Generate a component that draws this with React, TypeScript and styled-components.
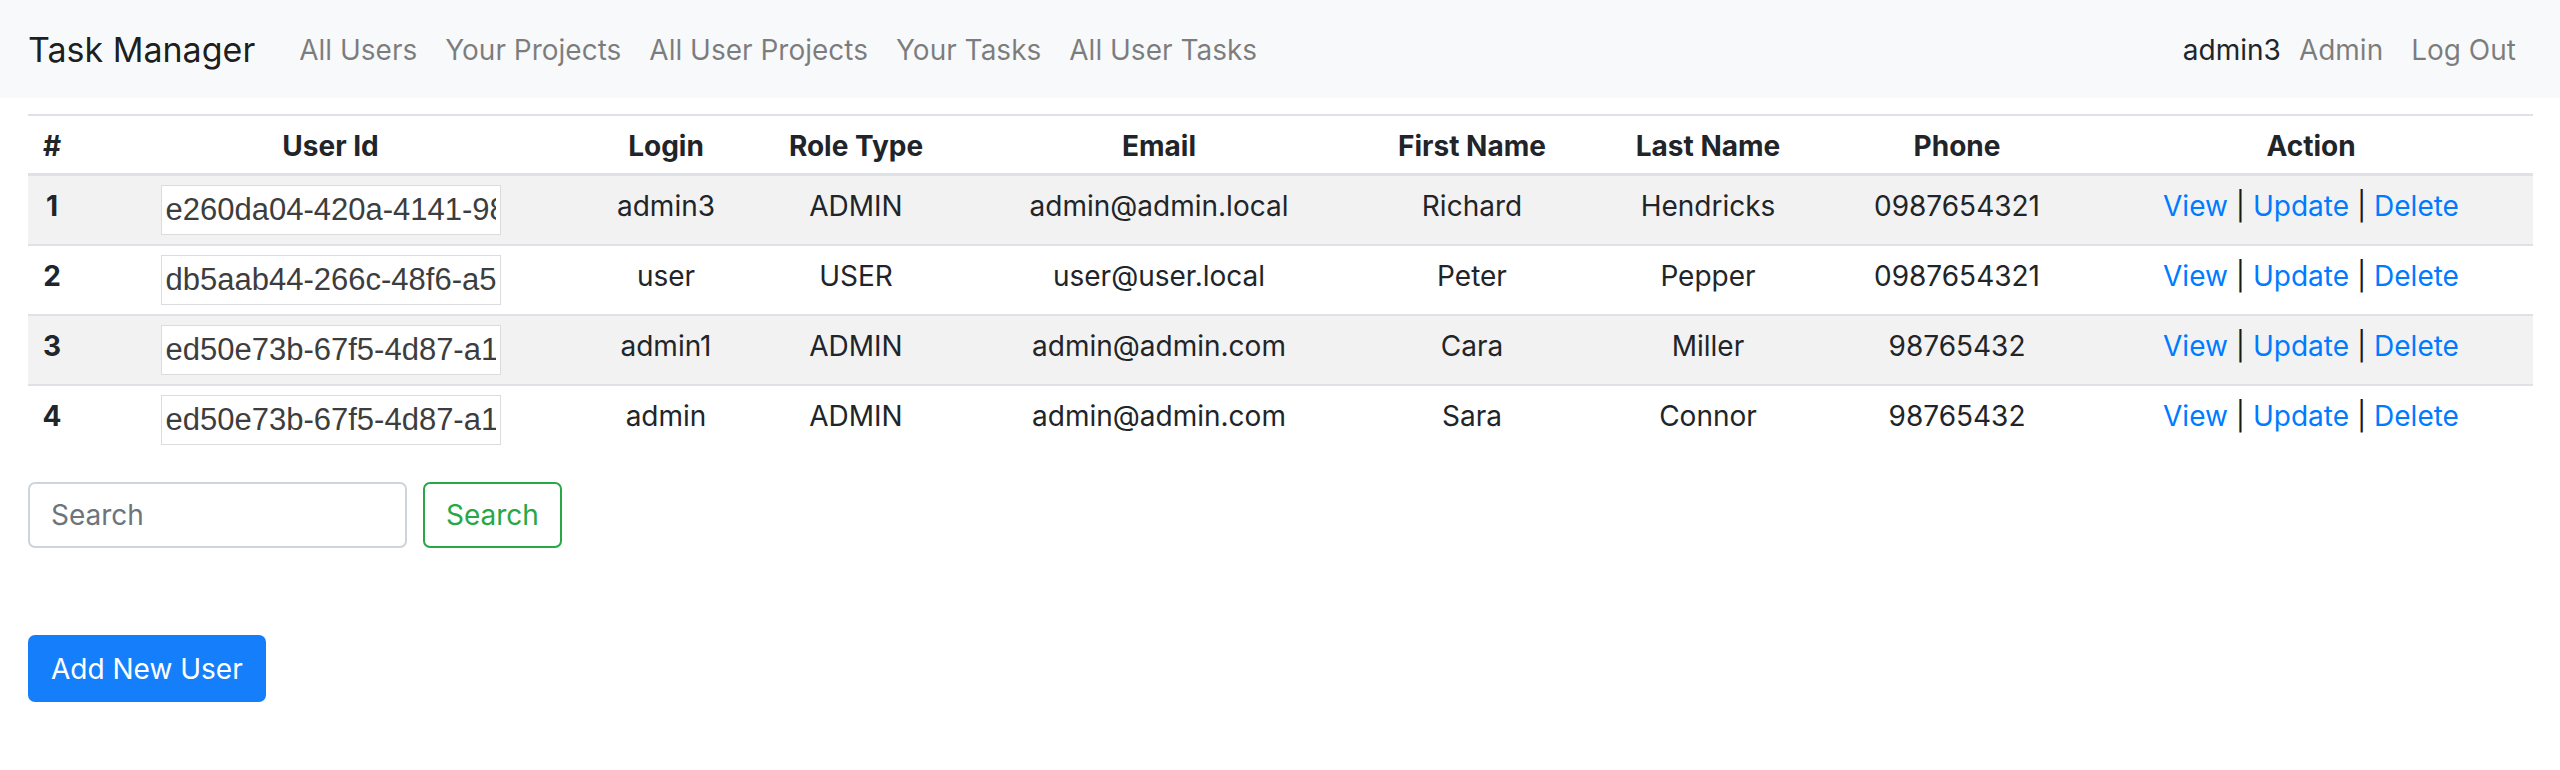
import React from "react";
import styled, { createGlobalStyle } from "styled-components";

const GlobalStyle = createGlobalStyle`
  html, body { margin: 0; padding: 0; background: #ffffff; }
  body {
    font-family: Inter, "Noto Sans", "Liberation Sans", sans-serif;
    font-size: 28px;
    line-height: 1.5;
    color: #212529;
  }
  * { box-sizing: border-box; }
`;

const Navbar = styled.nav`
  display: flex;
  align-items: center;
  height: 98px;
  padding: 2px 44px 0 28px;
  background: #f8f9fa;
`;

const Brand = styled.a`
  font-size: 34px;
  line-height: 1;
  color: rgba(0, 0, 0, 0.9);
  text-decoration: none;
  margin-right: 44px;
`;

const NavList = styled.div`
  display: flex;
  align-items: center;
`;

const NavLink = styled.a<{ $first?: boolean; $last?: boolean }>`
  font-size: 28px;
  line-height: 1;
  padding: 0 ${(p) => (p.$last ? 0 : 14)}px 0 ${(p) => (p.$first ? 0 : 14)}px;
  color: rgba(0, 0, 0, 0.5);
  text-decoration: none;
`;

const Spacer = styled.div`
  flex: 1;
`;

const UserName = styled.span`
  font-size: 28px;
  line-height: 1;
  color: #212529;
  margin-right: 4px;
`;

const Main = styled.main`
  padding: 16px 27px 0 28px;
`;

const Table = styled.table`
  width: 100%;
  border-collapse: collapse;
  table-layout: fixed;
  font-size: 28px;
`;

const HeadCell = styled.th`
  font-weight: 700;
  text-align: center;
  line-height: 42px;
  padding: 9px 0 6px;
  border-top: 2px solid #dee2e6;
  border-bottom: 3px solid #dee2e6;
  white-space: nowrap;
`;

const Row = styled.tr<{ $striped: boolean }>`
  background: ${(p) => (p.$striped ? "#f2f2f2" : "transparent")};
`;

const Cell = styled.td<{ $bold?: boolean }>`
  text-align: center;
  vertical-align: top;
  line-height: 42px;
  padding: 9px 0 9px;
  border-top: 2px solid #dee2e6;
  font-weight: ${(p) => (p.$bold ? 700 : 400)};
  white-space: nowrap;
`;

const IdInput = styled.input`
  display: block;
  margin: 0 auto;
  width: 340px;
  height: 50px;
  padding: 0 4px;
  border: 1px solid #dcdcdc;
  background: #ffffff;
  font-family: "Liberation Sans", Arial, sans-serif;
  font-size: 31px;
  color: #3d3d3d;
  outline: none;
`;

const ActionLink = styled.a`
  color: #007bff;
  text-decoration: none;
`;

const Pipe = styled.span`
  color: #1a1a1a;
`;

const SearchForm = styled.form`
  display: flex;
  align-items: center;
  gap: 16px;
  margin-top: 28px;
`;

const SearchInput = styled.input`
  width: 379px;
  height: 66px;
  padding: 0 21px;
  border: 2px solid #ced4da;
  border-radius: 7px;
  font-family: Inter, "Noto Sans", sans-serif;
  font-size: 28px;
  color: #495057;
  background: #ffffff;
  outline: none;
  &::placeholder {
    color: #6c757d;
  }
`;

const OutlineButton = styled.button`
  height: 66px;
  padding: 0 21px;
  border: 2px solid #28a745;
  border-radius: 7px;
  background: transparent;
  color: #28a745;
  font-family: Inter, "Noto Sans", sans-serif;
  font-size: 28px;
  line-height: 1;
`;

const PrimaryButton = styled.button`
  display: block;
  margin-top: 87px;
  height: 67px;
  padding: 0 23px;
  border: none;
  border-radius: 7px;
  background: #157ffb;
  color: #ffffff;
  font-family: Inter, "Noto Sans", sans-serif;
  font-size: 28px;
  line-height: 1;
`;

const columns: { label: string; width: number }[] = [
  { label: "#", width: 48 },
  { label: "User Id", width: 509 },
  { label: "Login", width: 162 },
  { label: "Role Type", width: 218 },
  { label: "Email", width: 388 },
  { label: "First Name", width: 238 },
  { label: "Last Name", width: 234 },
  { label: "Phone", width: 264 },
  { label: "Action", width: 444 },
];

const users = [
  {
    id: "e260da04-420a-4141-98c1-3f6b2a7d9e10",
    login: "admin3",
    role: "ADMIN",
    email: "admin@admin.local",
    first: "Richard",
    last: "Hendricks",
    phone: "0987654321",
  },
  {
    id: "db5aab44-266c-48f6-a5d2-9b1e4c7f0a33",
    login: "user",
    role: "USER",
    email: "user@user.local",
    first: "Peter",
    last: "Pepper",
    phone: "0987654321",
  },
  {
    id: "ed50e73b-67f5-4d87-a1c9-5e2f8b3d6a41",
    login: "admin1",
    role: "ADMIN",
    email: "admin@admin.com",
    first: "Cara",
    last: "Miller",
    phone: "98765432",
  },
  {
    id: "ed50e73b-67f5-4d87-a1c9-5e2f8b3d6a42",
    login: "admin",
    role: "ADMIN",
    email: "admin@admin.com",
    first: "Sara",
    last: "Connor",
    phone: "98765432",
  },
];

export default function App() {
  return (
    <>
      <GlobalStyle />
      <Navbar>
        <Brand href="#">Task Manager</Brand>
        <NavList>
          <NavLink href="#" $first>All Users</NavLink>
          <NavLink href="#">Your Projects</NavLink>
          <NavLink href="#">All User Projects</NavLink>
          <NavLink href="#">Your Tasks</NavLink>
          <NavLink href="#">All User Tasks</NavLink>
        </NavList>
        <Spacer />
        <UserName>admin3</UserName>
        <NavLink href="#">Admin</NavLink>
        <NavLink href="#" $last>Log Out</NavLink>
      </Navbar>
      <Main>
        <Table>
          <colgroup>
            {columns.map((c) => (
              <col key={c.label} style={{ width: c.width }} />
            ))}
          </colgroup>
          <thead>
            <tr>
              {columns.map((c) => (
                <HeadCell key={c.label}>{c.label}</HeadCell>
              ))}
            </tr>
          </thead>
          <tbody>
            {users.map((u, i) => (
              <Row key={u.id} $striped={i % 2 === 0}>
                <Cell $bold>{i + 1}</Cell>
                <Cell>
                  <IdInput readOnly value={u.id} />
                </Cell>
                <Cell>{u.login}</Cell>
                <Cell>{u.role}</Cell>
                <Cell>{u.email}</Cell>
                <Cell>{u.first}</Cell>
                <Cell>{u.last}</Cell>
                <Cell>{u.phone}</Cell>
                <Cell>
                  <ActionLink href="#">View</ActionLink> <Pipe>|</Pipe>{" "}
                  <ActionLink href="#">Update</ActionLink> <Pipe>|</Pipe>{" "}
                  <ActionLink href="#">Delete</ActionLink>
                </Cell>
              </Row>
            ))}
          </tbody>
        </Table>
        <SearchForm onSubmit={(e) => e.preventDefault()}>
          <SearchInput placeholder="Search" />
          <OutlineButton type="submit">Search</OutlineButton>
        </SearchForm>
        <PrimaryButton type="button">Add New User</PrimaryButton>
      </Main>
    </>
  );
}
